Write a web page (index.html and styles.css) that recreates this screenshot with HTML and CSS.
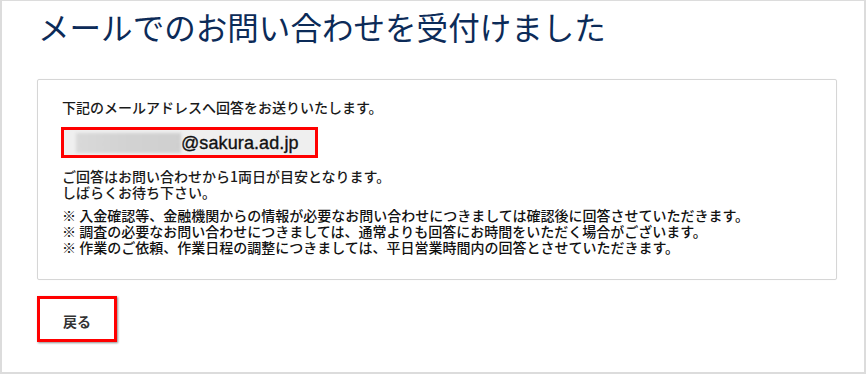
FILE: index.html
```html
<!DOCTYPE html>
<html lang="ja">
<head>
<meta charset="utf-8">
<link rel="stylesheet" href="styles.css">
</head>
<body>
<div class="frame">
  <h1 class="title">メールでのお問い合わせを受付けました</h1>
  <div class="card">
    <p class="lead">下記のメールアドレスへ回答をお送りいたします。</p>
    <div class="email"><span class="redact"></span><span class="domain">@sakura.ad.jp</span></div>
    <p class="info">ご回答はお問い合わせから1両日が目安となります。<br>しばらくお待ち下さい。</p>
    <ul class="notes">
      <li>※ 入金確認等、金融機関からの情報が必要なお問い合わせにつきましては確認後に回答させていただきます。</li>
      <li>※ 調査の必要なお問い合わせにつきましては、通常よりも回答にお時間をいただく場合がございます。</li>
      <li>※ 作業のご依頼、作業日程の調整につきましては、平日営業時間内の回答とさせていただきます。</li>
    </ul>
  </div>
  <button class="back">戻る</button>
</div>
</body>
</html>
```

FILE: styles.css
```css
html, body {
  margin: 0;
  padding: 0;
  background: #fff;
}
body {
  font-family: "Noto Sans CJK JP", "Noto Sans", sans-serif;
  color: #222;
}
.frame {
  box-sizing: border-box;
  width: 866px;
  height: 374px;
  border: 2px solid #dcdcdc;
  border-top-width: 1px;
  padding: 6px 27px 0 35px;
  display: flex;
  flex-direction: column;
  align-items: flex-start;
}
.title {
  margin: 0 0 0 1px;
  font-size: 31.5px;
  line-height: 38px;
  font-weight: 400;
  color: #0c2b58;
  letter-spacing: 0.05px;
}
.card {
  box-sizing: border-box;
  align-self: stretch;
  margin-top: 34px;
  border: 1px solid #d6d6d6;
  border-radius: 2px;
  box-shadow: 0 0 1px rgba(0,0,0,0.08);
  padding: 19px 24px 24px 24px;
  font-size: 14px;
  line-height: 16px;
  font-weight: 500;
  color: #1a1a1a;
}
.lead {
  margin: 0;
}
.email {
  box-sizing: border-box;
  display: flex;
  align-items: center;
  width: 257px;
  height: 31px;
  margin: 12px 0 0 -1px;
  border: 3px solid #ff0000;
  background: #efefef;
  padding-left: 12px;
}
.redact {
  display: block;
  width: 105px;
  height: 20px;
  background: linear-gradient(90deg, #d9d9d9, #d2d2d2 50%, #cfcfcf);
  filter: blur(1.5px);
}
.domain {
  font-family: "Liberation Sans", Arial, sans-serif;
  font-size: 18px;
  line-height: 20px;
  font-weight: 400;
  color: #111;
  letter-spacing: 0.1px;
  -webkit-text-stroke: 0.35px #111;
}
.info {
  margin: 10px 0 0;
}
.notes {
  list-style: none;
  margin: 7px 0 0;
  padding: 0;
  color: #111;
}
.back {
  box-sizing: border-box;
  margin-top: 16px;
  width: 80px;
  height: 46px;
  border: 3px solid #ff0000;
  background: #fff;
  box-shadow: 1px 1px 2px rgba(0,0,0,0.45);
  font-family: "Noto Sans CJK JP", sans-serif;
  font-size: 14px;
  font-weight: 700;
  color: #333;
  padding: 3px 0 0;
}
```
